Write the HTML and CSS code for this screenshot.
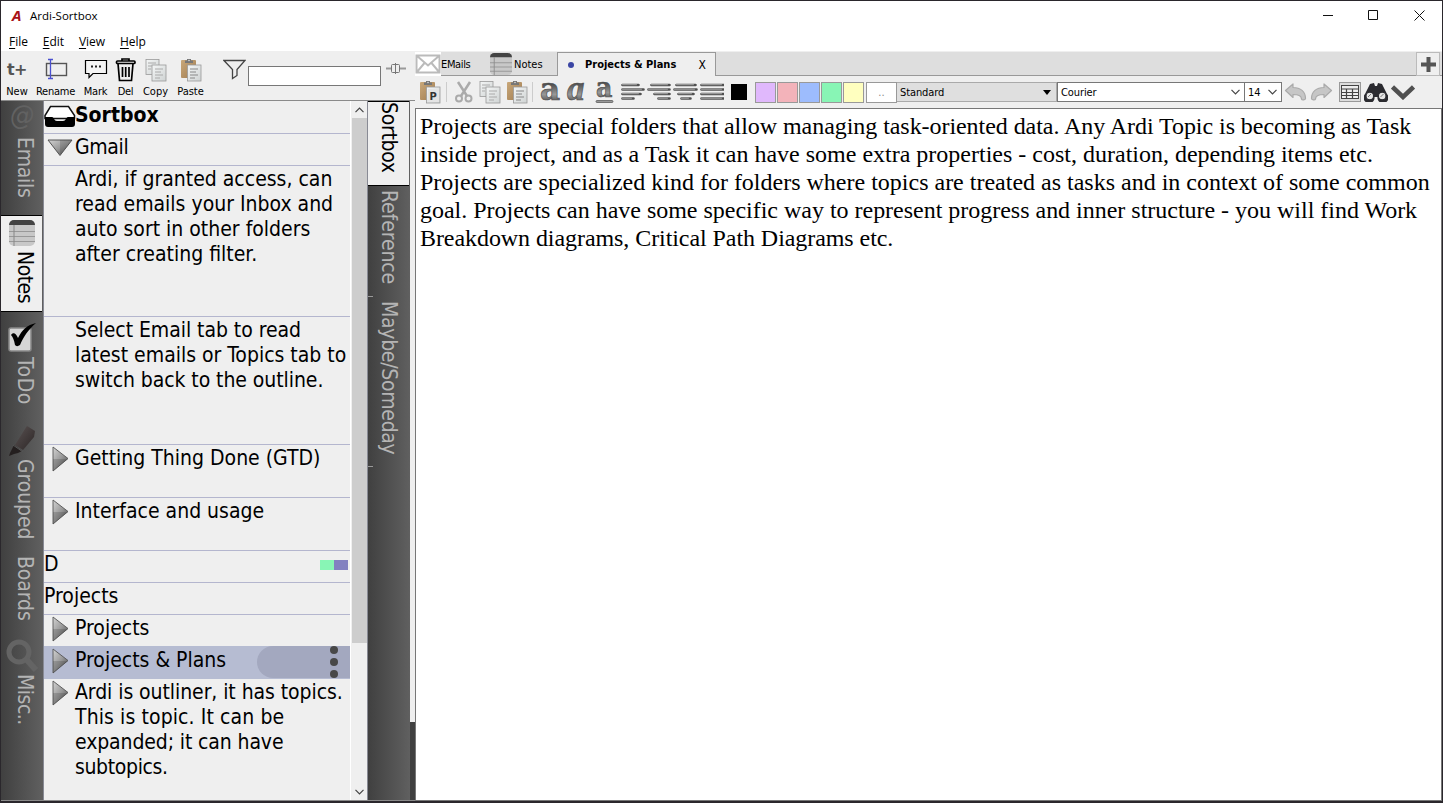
FILE: index.html
```html
<!DOCTYPE html>
<html lang="en">
<head>
<meta charset="utf-8">
<title>Ardi-Sortbox</title>
<link rel="stylesheet" href="styles.css">
</head>
<body>
<svg class="defs" width="0" height="0">
  <defs>
    <linearGradient id="metal" x1="0" y1="0" x2="0" y2="1"><stop offset=".35" stop-color="#4a4a4a"/><stop offset=".65" stop-color="#999"/><stop offset=".85" stop-color="#555"/></linearGradient>
    <linearGradient id="tri" x1="0" y1="0" x2="1" y2="1"><stop offset="0" stop-color="#d4d4d4"/><stop offset=".5" stop-color="#999"/><stop offset="1" stop-color="#444"/></linearGradient>
    <linearGradient id="paper" x1="0" y1="0" x2="1" y2="1"><stop offset="0" stop-color="#f4f6f6"/><stop offset="1" stop-color="#cfd3d3"/></linearGradient>
    <linearGradient id="board" x1="0" y1="0" x2="1" y2="1"><stop offset="0" stop-color="#c9a87a"/><stop offset="1" stop-color="#a07c50"/></linearGradient>
    <linearGradient id="pen" x1="0" y1="0" x2="1" y2="1"><stop offset="0" stop-color="#5a5252"/><stop offset="1" stop-color="#2c2626"/></linearGradient>
    <symbol id="copy" viewBox="0 0 22 24">
      <g fill="url(#paper)" stroke="#999" stroke-width=".8"><rect x="1" y="1.500" width="13" height="15"/><rect x="7" y="7" width="14" height="16"/></g>
      <path d="M3 5h8M3 8h4M3 11h3M10 11h8M10 14h6M10 17h8M10 20h5" stroke="#aaa" fill="none"/>
    </symbol>
    <symbol id="paste" viewBox="0 0 22 24">
      <rect x="1" y="2" width="15" height="18" rx="1" fill="url(#board)"/>
      <path d="M5 5V2.500h2V1h4v1.500h2V5z" fill="#777"/><circle cx="9" cy="2.500" r=".8" fill="#ddd"/>
      <rect x="7.500" y="7" width="13.500" height="16" fill="url(#paper)" stroke="#999" stroke-width=".8"/>
      <path d="M10 11h8M10 14h6M10 17h8M10 20h5" stroke="#888" fill="none"/>
    </symbol>
    <symbol id="arrow" viewBox="0 0 17 26"><path d="M1 1v24l15-12.500z" fill="url(#tri)" stroke="#555" stroke-width=".9"/><path d="M1 13h15L1 25z" fill="#333" opacity=".22"/></symbol>
    <symbol id="notes" viewBox="0 0 26 26">
      <rect width="26" height="26" rx="5" fill="#c8c8c8"/><path d="M0 5a5 5 0 0 1 5-5h16a5 5 0 0 1 5 5z" fill="#444"/>
      <path d="M0 11.500h26M0 16.500h26M0 21.500h26" stroke="#999" stroke-width="1.200"/><path d="M5 5v21" stroke="#888"/>
    </symbol>
    <symbol id="chev" viewBox="0 0 9 6"><path d="M.5.8l4 4 4-4" fill="none" stroke="#444" stroke-width="1.200"/></symbol>
    <symbol id="undo" viewBox="0 0 22 18"><path d="M1 7.500L8.500 1v3.500C16 4.500 21 8.500 21 15.500c0 1.500-3.500 2-4 .5 0-3-3-4.500-8.500-4.500v3z" fill="#c6c6c6" stroke="#aaa" stroke-width="1.200" stroke-linejoin="round"/></symbol>
  </defs>
</svg>
<div class="window">
  <header class="titlebar">
    <span class="logo">A</span><span class="title t">Ardi-Sortbox</span>
    <svg class="winctl" width="102" height="12" viewBox="0 0 102 12" fill="none" stroke="#111"><path d="M0 5.500h10M45.500.500h9v9h-9zM91.500.5l10 10M101.500.5l-10 10"/></svg>
  </header>
  <nav class="menu"><span><u>F</u>ile</span><span><u>E</u>dit</span><span><u>V</u>iew</span><span><u>H</u>elp</span></nav>
  <main class="body">
    <section class="left">
      <div class="tools">
        <div class="tool"><b class="tplus">t+</b><span class="t">New</span></div>
        <div class="tool"><svg width="24" height="24"><rect x="2.500" y="5.500" width="20" height="12" fill="none" stroke="#555" stroke-width="1.400"/><path d="M6.500 1.500v19M4 1.500h5M4 20.500h5" stroke="#4a50d0" fill="none" stroke-width="1.300"/></svg><span class="t tight">Rename</span></div>
        <div class="tool"><svg width="24" height="24"><path d="M1.500 2.500h21v13H9l-4 4v-4H1.500z" fill="#f4f4f4" stroke="#000" stroke-width="1.200"/><path d="M7 8.500h2M11 8.500h2M15 8.500h2" stroke="#222" stroke-width="2"/></svg><span class="t tight">Mark</span></div>
        <div class="tool"><svg width="22" height="24" fill="none" stroke="#000" stroke-width="1.700"><path d="M3 5.500l1.500 17h12l1.500-17"/><rect x="1.500" y="3" width="18.500" height="2.500" rx="1"/><path d="M7 3V1h7v2M7.500 9v10M10.700 9v10M14 9v10"/></svg><span class="t tight">Del</span></div>
        <div class="tool"><svg width="22" height="24"><use href="#copy"/></svg><span class="t">Copy</span></div>
        <div class="tool"><svg width="22" height="24"><use href="#paste"/></svg><span class="t">Paste</span></div>
        <svg class="funnel" width="23" height="21" fill="none" stroke="#444" stroke-width="1.300"><path d="M1 1.500h21l-8 9v6l-4.500 3v-9z"/></svg>
        <div class="search"></div>
        <svg class="slider" width="20" height="13"><path d="M0 6.500h20" stroke="#999" stroke-width="2"/><rect x="5.500" y="2.500" width="8" height="8" rx="1" fill="#eee" stroke="#777"/><path d="M9.500 1v11" stroke="#777"/></svg>
      </div>
      <div class="panes">
        <aside class="strip main-strip">
          <div class="vtab v-emails"><span class="at">@</span><span class="t">Emails</span></div>
          <div class="vtab v-notes on"><svg width="26" height="26"><use href="#notes"/></svg><span class="t">Notes</span></div>
          <div class="vtab v-todo"><svg width="30" height="30"><rect x="2" y="6" width="22" height="23" rx="2" fill="#d5d5d5" stroke="#888" stroke-width="1.500"/><path d="M4 13c2-3 5-2 7 3C15 8 20 3 29 1 21 8 17 14 13 23c-2 1.500-4 1.500-5 0C7 18 6 15 4 13z" fill="#000"/></svg><span class="t">ToDo</span></div>
          <div class="vtab v-grouped"><svg width="28" height="32"><path d="M19 1l8 5-1 6-11 13-8-5L17 4z" fill="url(#pen)"/><path d="M6 20l8 6-4 2-4 1-5 2 1-3z" fill="#241f1f"/><path d="M5 20l10 7" stroke="#555"/></svg><span class="t">Grouped</span></div>
          <div class="vtab v-boards"><span class="t">Boards</span></div>
          <div class="vtab v-misc"><svg width="32" height="34" fill="none" stroke="#646464"><circle cx="13" cy="13" r="10" stroke-width="5"/><path d="M20 20l10 11" stroke-width="6"/></svg><span class="t">Misc..</span></div>
        </aside>
        <div class="list">
          <div class="row r0"><svg width="32" height="23"><path d="M6.500 1.500h18l6 9v3H1v-3z" fill="#fff" stroke="#111" stroke-width="1.500"/><path d="M1 12h7c2 0 2 4 5 4h6c3 0 3-4 5-4h7v7a3 3 0 0 1-3 3H4a3 3 0 0 1-3-3z" fill="#000"/></svg><div class="txt"><b class="t">Sortbox</b></div></div>
          <div class="row r1"><svg class="down" width="26" height="17"><path d="M1 1h24L13 16.500z" fill="url(#tri)" stroke="#555"/><path d="M13 1v15L25 1z" fill="#333" opacity=".2"/></svg><div class="txt"><span class="t n4">Gmail</span></div></div>
          <div class="row r2"><div class="txt"><span class="t">Ardi, if granted access, can</span><span class="t">read emails your Inbox and</span><span class="t">auto sort in other folders</span><span class="t">after creating filter.</span></div></div>
          <div class="row r3"><div class="txt"><span class="t n05">Select Email tab to read</span><span class="t">latest emails or Topics tab to</span><span class="t n1">switch back to the outline.</span></div></div>
          <div class="row r4"><svg class="arr"><use href="#arrow"/></svg><div class="txt"><span class="t">Getting Thing Done (GTD)</span></div></div>
          <div class="row r5"><svg class="arr"><use href="#arrow"/></svg><div class="txt"><span class="t">Interface and usage</span></div></div>
          <div class="row r6 flat"><div class="txt"><span class="t">D</span></div><div class="tags"><i class="green"></i><i class="violet"></i></div></div>
          <div class="row r7 flat"><div class="txt"><span class="t">Projects</span></div></div>
          <div class="row r8"><svg class="arr"><use href="#arrow"/></svg><div class="txt"><span class="t">Projects</span></div></div>
          <div class="row r9 sel"><svg class="arr"><use href="#arrow"/></svg><div class="txt"><span class="t">Projects &amp; Plans</span></div><div class="more"><i></i><i></i><i></i></div></div>
          <div class="row r10"><svg class="arr"><use href="#arrow"/></svg><div class="txt"><span class="t n1">Ardi is outliner, it has topics.</span><span class="t p1">This is topic. It can be</span><span class="t n15">expanded; it can have</span><span class="t n4">subtopics.</span></div></div>
        </div>
        <div class="scroll"><svg width="9" height="6" class="up"><use href="#chev"/></svg><div class="thumb"></div><svg width="9" height="6"><use href="#chev"/></svg></div>
        <aside class="strip sub-strip">
          <div class="vtab s-sortbox on"><span class="t">Sortbox</span></div>
          <div class="vtab s-reference"><span class="t">Reference</span></div>
          <div class="vtab s-maybe"><span class="t">Maybe/Someday</span></div>
        </aside>
        <div class="split"></div>
      </div>
    </section>
    <section class="right">
      <div class="tabs">
        <div class="tab mail"><svg width="26" height="24"><rect width="26" height="24" fill="#fff"/><path d="M1.500 3.500h23v17h-23zM1.500 3.500L13 13.500l11.500-10M1.500 20.500l8-9.500M24.500 20.500l-8-9.500" fill="none" stroke="#bbb" stroke-width="2"/></svg><span class="t">EMails</span></div>
        <div class="tab ntab"><svg width="22" height="22"><use href="#notes"/></svg><span class="t">Notes</span></div>
        <div class="tab cur"><i class="dot"></i><b class="t">Projects &amp; Plans</b><span class="x">X</span></div>
        <div class="add"><svg width="17" height="17"><path d="M8.500 1v15M1 8.500h15" stroke="#555" stroke-width="4"/></svg></div>
      </div>
      <div class="format">
        <svg class="f-pp" width="22" height="24"><use href="#paste"/><rect x="9" y="9" width="11" height="13" fill="#e4e4e4"/><text x="10.500" y="20" class="p-mark">P</text></svg>
        <i class="sep s1"></i>
        <svg class="f-cut" width="20" height="22" fill="none" stroke="#aaa"><path d="M4 1l9 14M16 1L7 15" stroke-width="2.500"/><circle cx="5" cy="17.500" r="3" stroke-width="2"/><circle cx="14.500" cy="17.500" r="3" stroke-width="2"/></svg>
        <svg class="f-copy" width="22" height="24"><use href="#copy"/></svg>
        <svg class="f-paste" width="22" height="24"><use href="#paste"/></svg>
        <i class="sep s2"></i>
        <svg class="glyphs" width="76" height="24" fill="url(#metal)" stroke="#505050" stroke-width=".7"><text class="g-bold" x="0" y="20">a</text><text class="g-italic" x="27" y="20">a</text><text class="g-under" x="56" y="17">a</text><rect x="56" y="20.500" width="17" height="2" rx="1" fill="#999"/></svg>
        <svg class="al" width="103" height="18" stroke="#505050" stroke-width="2.600" stroke-linecap="round"><path d="M1.500 2h16M1.500 6.500h21M1.500 11h18M1.500 15.500h11M30.500 2h18M27.500 6.500h21M33.500 11h15M37.500 15.500h11M55.500 2h19M53.500 6.500h22M57.500 11h15M60.500 15.500h9M80.500 2h22M80.500 6.500h22M80.500 11h22M80.500 15.500h22"/><path stroke="#a8a8a8" stroke-width="1" d="M1.500 1.700h14M1.500 6.200h19M1.500 10.700h16M1.500 15.200h9M30.500 1.700h16M27.500 6.200h19M33.500 10.700h13M37.500 15.200h9M55.500 1.700h17M53.500 6.200h20M57.500 10.700h13M60.500 15.200h7M80.500 1.700h20M80.500 6.200h20M80.500 10.700h20M80.500 15.200h20"/></svg>
        <i class="black"></i>
        <i class="sw c1"></i><i class="sw c2"></i><i class="sw c3"></i><i class="sw c4"></i><i class="sw c5"></i>
        <span class="dots">..</span>
        <div class="std"><span class="t">Standard</span><svg width="8" height="5"><path d="M0 0h8L4 5z"/></svg></div>
        <div class="combo font"><span class="t">Courier</span><svg width="9" height="6"><use href="#chev"/></svg></div>
        <div class="combo size"><span class="t">14</span><svg width="9" height="6"><use href="#chev"/></svg></div>
        <svg class="f-undo" width="23" height="18"><use href="#undo"/></svg>
        <svg class="f-redo" width="23" height="18"><use href="#undo"/></svg>
        <svg class="f-table" width="22" height="20"><rect x=".5" y=".5" width="21" height="19" fill="#ddd" stroke="#999"/><rect x="2.500" y="3.500" width="17" height="13" fill="#eee" stroke="#444"/><path d="M2 7h18M2 10.500h18M2 13.500h18M7.500 7v10M13.500 7v10" stroke="#444" fill="none" stroke-width="1.200"/></svg>
        <svg class="f-bino" width="24" height="19"><path d="M6 1l4-1 1 3h2l1-3 4 1 5 10a5.500 5.500 0 1 1-9.500 3h-3A5.500 5.500 0 1 1 1 11z" fill="#2b2b30"/><g fill="#e6e6e6" stroke="#2b2b30" stroke-width="1.200"><circle cx="5.800" cy="13" r="3.800"/><circle cx="18.200" cy="13" r="3.800"/></g><path d="M4 14l3-3M16.500 14l3-3" stroke="#777"/></svg>
        <svg class="f-chev" width="24" height="15"><path d="M1.500 2L12 12 22.500 2" fill="none" stroke="#505050" stroke-width="4.500"/></svg>
      </div>
      <article class="editor">
        <p class="e1">Projects are special folders that allow managing task-oriented data. Any Ardi Topic is becoming as Task</p>
        <p>inside project, and as a Task it can have some extra properties - cost, duration, depending items etc.</p>
        <p>Projects are specialized kind for folders where topics are treated as tasks and in context of some common</p>
        <p class="e4">goal. Projects can have some specific way to represent progress and inner structure - you will find Work</p>
        <p class="e5">Breakdown diagrams, Critical Path Diagrams etc.</p>
      </article>
    </section>
  </main>
</div>
</body>
</html>
```
FILE: styles.css
```css
* { box-sizing: border-box; }
body { margin: 0; font-family: "DejaVu Sans Condensed", "DejaVu Sans", sans-serif; font-stretch: condensed; color: #000; }
.defs { position: absolute; }
svg { display: block; flex: none; }
i { display: block; flex: none; }
.window { width: 1443px; height: 803px; border: 1px solid #2a272c; border-bottom-width: 2px; background: #fff; display: flex; flex-direction: column; overflow: hidden; }
.t { white-space: nowrap; }
.n05 { letter-spacing: -.05px; } .n1 { letter-spacing: -.07px; } .n15 { letter-spacing: -.12px; } .n4 { letter-spacing: -.35px; }
.p1 { letter-spacing: .1px; }
.tight { letter-spacing: -.25px; }
.titlebar { height: 31px; display: flex; align-items: center; flex: none; padding: 0 18px 2px 11px; }
.logo { font: italic bold 15px "Open Sans", sans-serif; color: #a81216; width: 18px; position: relative; top: -1px; }
.title { font: 11.5px/16px "Open Sans", sans-serif; flex: none; }
.winctl { margin: 0 -1px 0 auto; }
.menu { height: 19px; flex: none; display: flex; padding-left: 8px; font: 12px/19px "Open Sans", sans-serif; }
.menu span { margin-right: 14.8px; }
.menu u { text-underline-offset: 2px; text-decoration-thickness: 1px; }
.body { flex: 1; display: flex; background: #efefef; min-height: 0; }
.left { width: 414px; display: flex; flex-direction: column; flex: none; }
.tools { height: 49px; display: grid; grid-template-columns: 32px 45px 35px 25px 35px 35px 15px 25px 133px 5px 20px; flex: none; font-size: 11px; }
.tool { display: flex; flex-direction: column; align-items: center; padding-top: 7px; }
.tool .t { line-height: 14px; margin-top: 3px; }
.tplus { font: bold 16px/24px "DejaVu Sans", sans-serif; color: #555; height: 24px; letter-spacing: -.5px; }
.funnel { grid-column: 8; margin-top: 8px; }
.search { grid-column: 9; height: 20px; margin-top: 15px; border: 1px solid #777; background: #fff; }
.slider { grid-column: 11; margin-top: 11px; }
.panes { flex: 1; display: flex; border-top: 1px solid #8a8a8a; border-bottom: 1px solid #8a8a8a; min-height: 0; }
.strip { background: linear-gradient(90deg, #404040, #606060); color: #b4b4b4; font-size: 21px; display: flex; flex-direction: column; }
.main-strip { width: 42px; }
.vtab { display: flex; flex-direction: column; align-items: center; width: 42px; flex: none; letter-spacing: -.3px; }
.vtab .t { writing-mode: vertical-rl; line-height: 26px; width: 26px; margin-left: 6px; }
.sub-strip .vtab .t { margin-left: 0; }
.on { background: #efefef; color: #000; border: 1px solid #000; border-width: 1px 0; width: 41px; }
.at { font-size: 27px; line-height: 28px; color: #626262; height: 36px; font-style: italic; }
.v-emails { height: 114px; letter-spacing: -.3px; }
.v-notes { height: 97px; padding-top: 4px; letter-spacing: -.5px; }
.v-notes .t { margin-top: 5px; }
.v-todo { height: 113px; padding-top: 10px; letter-spacing: .6px; }
.v-todo .t { margin-top: 5px; }
.v-grouped { height: 130px; letter-spacing: -.1px; }
.v-grouped .t { margin-top: 2px; }
.v-boards { height: 84px; padding-top: 1px; letter-spacing: -.1px; }
.v-misc { letter-spacing: -.5px; }
.v-misc .t { margin-top: 1px; }
.list { width: 307px; border-left: 1px solid #888a94; font-size: 21px; overflow: hidden; }
.row { height: 32px; border-bottom: 1px solid #b4b6ce; display: flex; position: relative; }
.txt { margin-left: auto; padding-top: 1px; width: 275px; line-height: 25px; display: flex; flex-direction: column; align-items: flex-start; flex: none; }
.row > svg { position: absolute; left: 8px; top: 1px; }
.arr { width: 17px; height: 26px; }
.flat .txt { width: 306px; }
.r0 { height: 33px; }
.r0 .txt { padding-top: 2px; }
.r0 > svg { left: 0; top: 4px; }
.r1 > svg { left: 3px; top: 5px; }
.r2 { height: 151px; } .r3 { height: 128px; } .r4, .r5 { height: 53px; }
.r8 { height: 31px; border: 0; }
.sel { background: #b6bcd2; height: 33px; border: 0; }
.sel .txt { padding-top: 2px; }
.sel > svg { top: 2px; }
.r10 { border: 0; height: 122px; }
.tags { position: absolute; right: 2px; top: 9px; display: flex; }
.tags i { width: 14px; height: 10px; }
.green { background: #88f5b5; } .violet { background: #8280c0; }
.more { position: absolute; right: 0; top: 0; width: 93px; height: 32px; background: #a3a8bf; border-radius: 16px 0 0 16px; padding: 0 12px 0 73px; display: flex; flex-direction: column; justify-content: space-between; }
.more i { width: 8px; height: 8px; border-radius: 50%; background: #484848; }
.scroll { width: 17px; display: flex; flex-direction: column; align-items: center; border-left: 1px solid #fff; padding: 6px 0 5px; justify-content: space-between; }
.up { transform: rotate(180deg); }
.thumb { width: 15px; height: 525px; background: #cdcdcd; margin: 5px 0 auto; }
.sub-strip { width: 43px; border-left: 1px solid #888a94; }
.s-sortbox { height: 85px; }
.s-reference { height: 111px; padding-top: 4px; letter-spacing: -.1px; }
.s-maybe { height: 170px; padding-top: 4px; }
.s-reference, .s-maybe { background: linear-gradient(#999, #999) 0 100% / 5px 1px no-repeat; }
.split { width: 5px; background: linear-gradient(#efefef 621px, #404040 621px); }
.right { flex: 1; min-width: 0; display: flex; flex-direction: column; }
.tabs { height: 24px; margin-top: 1px; background: #dedede; border-bottom: 1px solid #999; display: flex; font-size: 11px; line-height: 23px; flex: none; }
.tab { display: flex; align-items: center; }
.mail { width: 74px; letter-spacing: -.35px; }
.mail .t, .ntab .t { padding-top: 1px; }
.ntab { width: 68px; gap: 2px; padding-left: 1px; }
.cur { width: 159px; height: 24px; background: #efefef; border: 1px solid #999; border-bottom: 0; padding-left: 10px; line-height: 14px; }
.dot { width: 6px; height: 6px; border-radius: 50%; background: #3b46a4; margin-right: 11px; }
.x { margin-left: auto; margin-right: 9px; font-size: 12px; }
.add { margin-left: auto; width: 24px; height: 24px; border: 1px solid #bbb; background: #efefef; display: flex; align-items: center; justify-content: center; margin-right: 2px; }
.format { height: 32px; display: flex; align-items: center; flex: none; font-size: 11px; padding-left: 4px; }
.p-mark { font: bold 11px "DejaVu Sans Condensed", sans-serif; fill: #333; }
.sep { width: 1px; height: 20px; background: #ccc; }
.s1 { margin-left: 5px; } .f-cut { margin-left: 7px; } .f-copy { margin-left: 5px; } .f-paste { margin-left: 5px; } .s2 { margin-left: 4px; }
.glyphs { margin-left: 7px; }
.g-bold { font: bold 31px "DejaVu Serif", serif; }
.g-italic { font: italic bold 35px "Liberation Serif", serif; }
.g-under { font: bold 28px "DejaVu Serif Condensed", "DejaVu Serif", serif; font-stretch: condensed; }
.al { margin-left: 5px; }
.black { width: 16px; height: 16px; background: #000; margin: 0 8px 0 7px; }
.sw { width: 21px; height: 21px; border: 1px solid #999; margin-right: 1px; }
.c1 { background: #e0b8fc; } .c2 { background: #f3b3ba; } .c3 { background: #9dbcfd; } .c4 { background: #88f5b5; } .c5 { background: #ffffbf; }
.dots { width: 31px; height: 21px; border: 1px solid #999; background: #fff; margin-left: 1px; text-align: center; color: #888; line-height: 20px; }
.std { width: 160px; height: 20px; background: #dfdfdf; border: 1px solid #aaa; border-left: 0; display: flex; align-items: center; justify-content: space-between; padding: 0 5px 0 3px; }
.combo { height: 20px; background: #fff; border: 1px solid #777; display: flex; align-items: center; justify-content: space-between; padding: 0 4px 0 3px; }
.font { width: 188px; } .size { width: 38px; margin-left: -1px; }
.std .t, .combo .t { padding-top: 1px; letter-spacing: -.1px; }
.f-undo { margin-left: 2px; } .f-redo { margin-left: 3px; transform: scaleX(-1); }
.f-table { margin-left: 6px; } .f-bino { margin-left: 3px; } .f-chev { margin-left: 3px; }
.editor { flex: 1; background: #fff; border: 1px solid #777; padding: 3px 4px; font: 24px/28px "Liberation Serif", serif; min-height: 0; }
.editor p { margin: 0; white-space: nowrap; }
.e1 { letter-spacing: -.055px; } .e4 { letter-spacing: -.015px; } .e5 { letter-spacing: -.07px; }
```
